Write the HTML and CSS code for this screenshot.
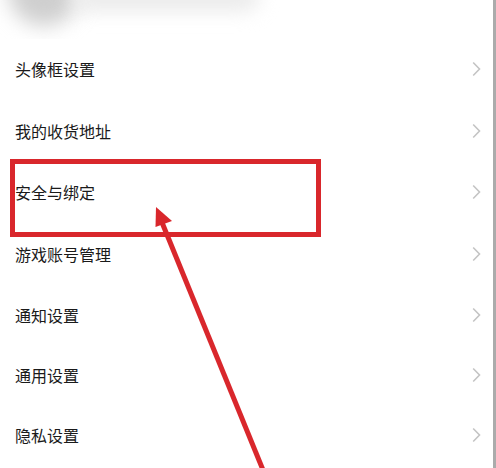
FILE: index.html
```html
<!DOCTYPE html>
<html lang="zh">
<head>
<meta charset="utf-8">
<link rel="stylesheet" href="styles.css">
</head>
<body>
<div class="page">
  <div class="header">
    <div class="avatar-blur"></div>
    <div class="name-blur"></div>
  </div>
  <ul class="menu">
    <li class="row tall"><span>头像框设置</span><svg class="chev" width="9" height="16" viewBox="0 0 9 16"><polyline points="1.2,1.5 7.5,8 1.2,14.5" fill="none" stroke="#c4c4c4" stroke-width="1.6"/></svg></li>
    <li class="row tall"><span>我的收货地址</span><svg class="chev" width="9" height="16" viewBox="0 0 9 16"><polyline points="1.2,1.5 7.5,8 1.2,14.5" fill="none" stroke="#c4c4c4" stroke-width="1.6"/></svg></li>
    <li class="row tall"><span>安全与绑定</span><svg class="chev" width="9" height="16" viewBox="0 0 9 16"><polyline points="1.2,1.5 7.5,8 1.2,14.5" fill="none" stroke="#c4c4c4" stroke-width="1.6"/></svg></li>
    <li class="row tall"><span>游戏账号管理</span><svg class="chev" width="9" height="16" viewBox="0 0 9 16"><polyline points="1.2,1.5 7.5,8 1.2,14.5" fill="none" stroke="#c4c4c4" stroke-width="1.6"/></svg></li>
    <li class="row"><span>通知设置</span><svg class="chev" width="9" height="16" viewBox="0 0 9 16"><polyline points="1.2,1.5 7.5,8 1.2,14.5" fill="none" stroke="#c4c4c4" stroke-width="1.6"/></svg></li>
    <li class="row"><span>通用设置</span><svg class="chev" width="9" height="16" viewBox="0 0 9 16"><polyline points="1.2,1.5 7.5,8 1.2,14.5" fill="none" stroke="#c4c4c4" stroke-width="1.6"/></svg></li>
    <li class="row"><span>隐私设置</span><svg class="chev" width="9" height="16" viewBox="0 0 9 16"><polyline points="1.2,1.5 7.5,8 1.2,14.5" fill="none" stroke="#c4c4c4" stroke-width="1.6"/></svg></li>
  </ul>
  <svg class="annot" width="496" height="468" viewBox="0 0 496 468">
    <rect x="12.5" y="161.5" width="306" height="73" fill="none" stroke="#d9272c" stroke-width="5"/>
    <line x1="161" y1="220" x2="263" y2="470" stroke="#d9272c" stroke-width="5"/>
    <polygon points="156,207 172,221 155.5,227" fill="#d9272c"/>
  </svg>
</div>
</body>
</html>
```

FILE: styles.css
```css
html, body {
  margin: 0;
  padding: 0;
  background: #ffffff;
}
.page {
  position: relative;
  width: 493px;
  height: 468px;
  overflow: hidden;
  border-right: 3px solid #ababab;
  background: #ffffff;
  font-family: "Noto Sans CJK SC", "Noto Sans", sans-serif;
}
.header {
  height: 38.5px;
  display: flex;
  align-items: flex-start;
  overflow: hidden;
}
.avatar-blur {
  flex: none;
  width: 72px;
  height: 72px;
  margin: -46px 0 0 8px;
  border-radius: 50%;
  background: #cfcfcf;
  filter: blur(10px);
}
.name-blur {
  flex: none;
  width: 190px;
  height: 30px;
  margin: -18px 0 0 -10px;
  border-radius: 15px;
  background: #ececec;
  filter: blur(9px);
}
.menu {
  list-style: none;
  margin: 0;
  padding: 0;
}
.row {
  height: 60px;
  display: flex;
  align-items: center;
  justify-content: space-between;
  padding: 0 12px 0 15px;
  font-size: 16px;
  color: #1a1a1a;
}
.row.tall {
  height: 61.5px;
}
.chev {
  display: block;
}
.annot {
  position: absolute;
  left: 0;
  top: 0;
  pointer-events: none;
}
```
